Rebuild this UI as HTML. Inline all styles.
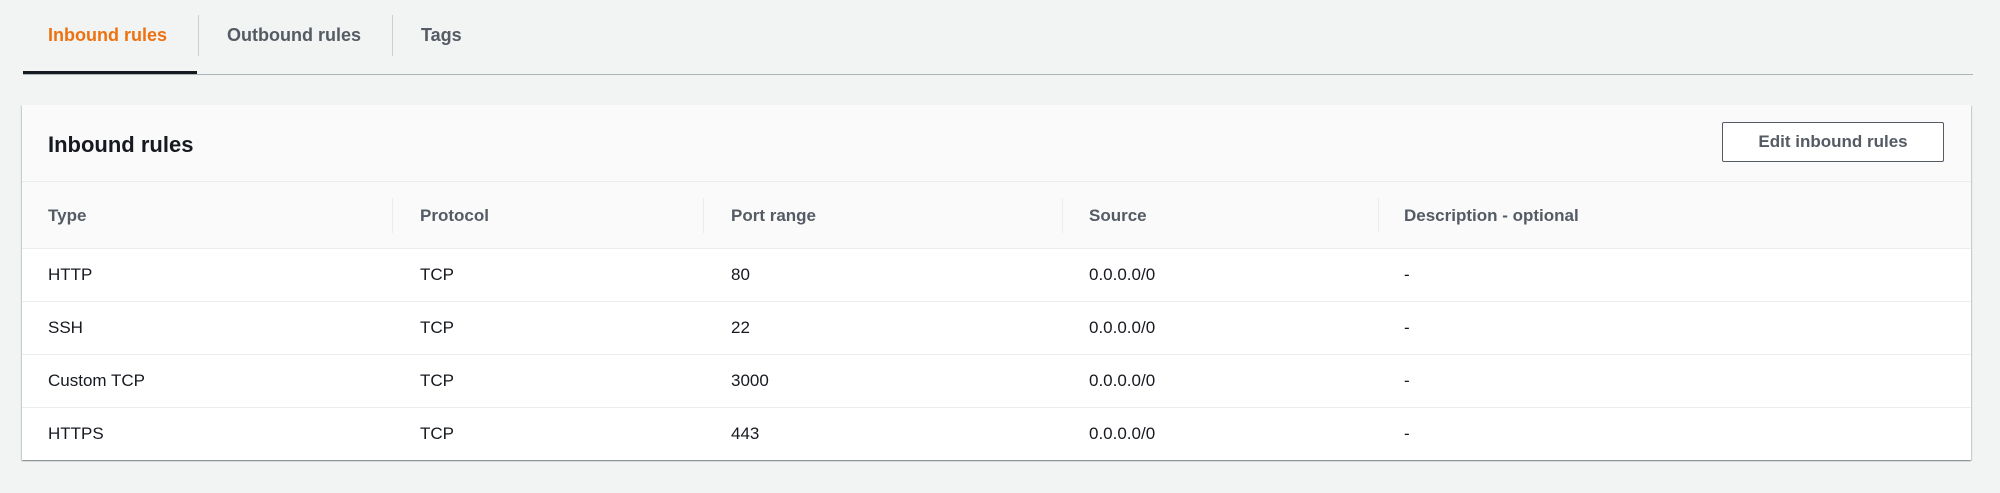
<!DOCTYPE html>
<html><head><meta charset="utf-8"><style>
*{margin:0;padding:0;box-sizing:border-box}
body{width:2000px;height:493px;background:#f2f3f3;font-family:"Liberation Sans",Arial,sans-serif;position:relative;overflow:hidden;color:#16191f}
.abs{position:absolute}
.tab{position:absolute;top:24px;font-size:18px;font-weight:bold;color:#545b64;line-height:22px}
.div{position:absolute;top:15px;width:1px;height:41px;background:#c8cfd0}
.panel{position:absolute;left:22px;top:105px;width:1949px;height:355px;background:#fff;box-shadow:0 1px 1px 0 rgba(0,28,36,.3),1px 1px 1px 0 rgba(0,28,36,.15),-1px 1px 1px 0 rgba(0,28,36,.15)}
.hdr{position:absolute;left:0;top:0;width:100%;height:77px;background:#fafafa;border-bottom:1px solid #eaeded}
.th{position:absolute;left:0;top:77px;width:100%;height:67px;background:#fafafa;border-bottom:1px solid #eaeded}
.c{position:absolute;font-size:17px;line-height:20px}
.h{font-weight:bold;color:#545b64}
.row{position:absolute;left:0;width:100%;height:53px;border-bottom:1px solid #eaeded}
.cd{position:absolute;top:93px;width:1px;height:35px;background:#eaeded}
</style></head><body>
<div class="tab" style="left:48px;color:#ec7211">Inbound rules</div>
<div class="div" style="left:198px"></div>
<div class="tab" style="left:227px">Outbound rules</div>
<div class="div" style="left:392px"></div>
<div class="tab" style="left:421px">Tags</div>
<div class="abs" style="left:23px;top:74px;width:1950px;height:1px;background:#aab7b8"></div>
<div class="abs" style="left:23px;top:71px;width:174px;height:3px;background:#16191f"></div>

<div class="panel">
 <div class="hdr">
  <div class="abs" style="left:26px;top:27px;font-size:22px;font-weight:bold;line-height:26px">Inbound rules</div>
  <div class="abs" style="left:1700px;top:17px;width:222px;height:40px;border:1px solid #545b64;border-radius:2px;background:#fff;font-size:17px;font-weight:bold;color:#545b64;text-align:center;line-height:38px">Edit inbound rules</div>
 </div>
 <div class="th">
  <div class="c h" style="left:26px;top:24px">Type</div>
  <div class="c h" style="left:398px;top:24px">Protocol</div>
  <div class="c h" style="left:709px;top:24px">Port range</div>
  <div class="c h" style="left:1067px;top:24px">Source</div>
  <div class="c h" style="left:1382px;top:24px">Description - optional</div>
 </div>
 <div class="cd" style="left:370px"></div><div class="cd" style="left:681px"></div><div class="cd" style="left:1040px"></div><div class="cd" style="left:1356px"></div>
 <div class="row" style="top:144px"><div class="c" style="left:26px;top:16px">HTTP</div><div class="c" style="left:398px;top:16px">TCP</div><div class="c" style="left:709px;top:16px">80</div><div class="c" style="left:1067px;top:16px">0.0.0.0/0</div><div class="c" style="left:1382px;top:16px">-</div></div>
 <div class="row" style="top:197px"><div class="c" style="left:26px;top:16px">SSH</div><div class="c" style="left:398px;top:16px">TCP</div><div class="c" style="left:709px;top:16px">22</div><div class="c" style="left:1067px;top:16px">0.0.0.0/0</div><div class="c" style="left:1382px;top:16px">-</div></div>
 <div class="row" style="top:250px"><div class="c" style="left:26px;top:16px">Custom TCP</div><div class="c" style="left:398px;top:16px">TCP</div><div class="c" style="left:709px;top:16px">3000</div><div class="c" style="left:1067px;top:16px">0.0.0.0/0</div><div class="c" style="left:1382px;top:16px">-</div></div>
 <div class="row" style="top:303px;border-bottom:none"><div class="c" style="left:26px;top:16px">HTTPS</div><div class="c" style="left:398px;top:16px">TCP</div><div class="c" style="left:709px;top:16px">443</div><div class="c" style="left:1067px;top:16px">0.0.0.0/0</div><div class="c" style="left:1382px;top:16px">-</div></div>
</div>
</body></html>
